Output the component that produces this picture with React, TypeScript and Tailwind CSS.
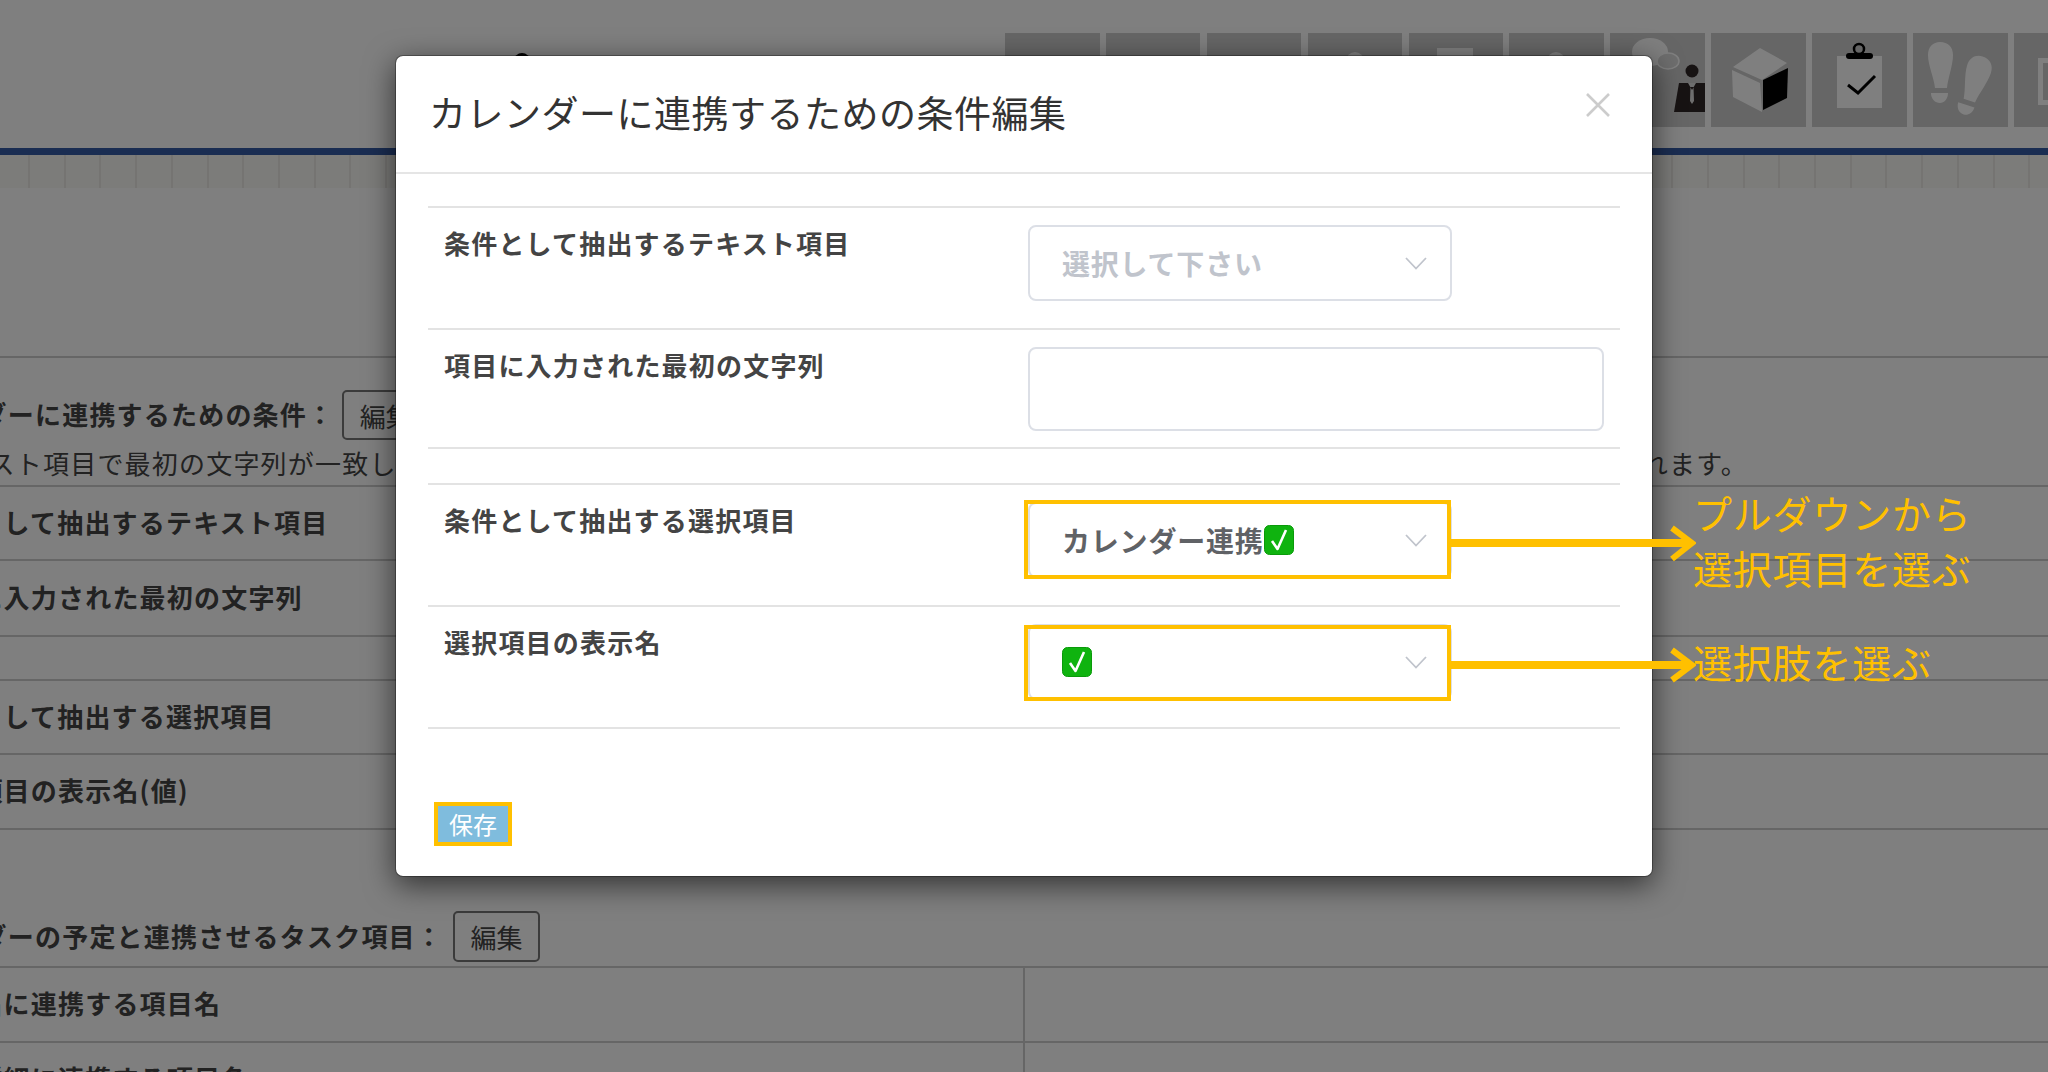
import React from "react";

const rowLabel = "text-[26px] font-bold tracking-[1.2px] leading-[36px] whitespace-nowrap";

function Tile({ children }: { children?: React.ReactNode }) {
  return (
    <div className="w-[94.5px] h-[94px] shrink-0 bg-[#cccccc] overflow-hidden">
      <svg viewBox="0 0 94.5 94" className="block w-[94.5px] h-[94px]">
        {children}
      </svg>
    </div>
  );
}

function CheckEmoji() {
  return (
    <svg viewBox="0 0 30 30" className="block w-[30px] h-[30px] shrink-0">
      <rect x="0.5" y="0.5" width="29" height="29" rx="5" fill="#0fb30f" stroke="#0a9a0a" />
      <path d="M8 16 L13.5 24 L22 5" fill="none" stroke="#ffffff" strokeWidth="2.6" strokeLinejoin="round" />
    </svg>
  );
}

function Chevron() {
  return (
    <svg viewBox="0 0 22 13" className="block w-[22px] h-[13px] shrink-0">
      <path d="M1 1 L11 11.5 L21 1" fill="none" stroke="#c0c4cc" strokeWidth="1.8" />
    </svg>
  );
}

function SelectBox({ children }: { children?: React.ReactNode }) {
  return (
    <div className="w-[424px] h-[76px] rounded-[8px] border-2 border-[#dcdfe6] flex items-center pl-[32px] pr-[23px] justify-between bg-white">
      <div className="flex items-center text-[28px] font-bold tracking-[0.8px] text-[#606266]">{children}</div>
      <Chevron />
    </div>
  );
}

function ModalRow({ label, h, children }: { label: string; h: string; children?: React.ReactNode }) {
  return (
    <div className={`flex border-b-2 border-[#e3e3e3] ${h}`}>
      <div className={`w-[600px] shrink-0 pl-[16px] pt-[17px] text-[#444444] ${rowLabel}`}>{label}</div>
      <div className="pt-[17px]">{children}</div>
    </div>
  );
}

function PageRow({ h, children }: { h: string; children?: React.ReactNode }) {
  return (
    <div className={`flex items-center border-b-2 border-[#cccccc] ${h}`}>
      <div className={`-ml-[78px] -mt-[3px] text-[#444444] ${rowLabel}`}>{children}</div>
    </div>
  );
}

function EditButton({ cls }: { cls: string }) {
  return (
    <div className={`w-[87px] rounded-[5px] border-2 border-[#777777] flex items-center justify-center text-[26px] text-[#444444] shrink-0 ${cls}`}>
      編集
    </div>
  );
}

const cells = Array.from({ length: 58 }, (_, i) => i);

export default function App() {
  return (
    <div className="relative w-[2048px] h-[1072px] overflow-hidden bg-white font-['Noto_Sans_CJK_JP','Noto_Sans_CJK_SC',sans-serif]">
      {/* page behind the dialog */}
      <div>
        <header className="relative h-[148px] pt-[33px] pl-[1005px] flex gap-[6.4px] overflow-hidden">
          <span className="absolute left-[514px] top-[53px] w-[16px] h-[16px] rounded-full bg-black" />
          <Tile><circle cx="46" cy="29" r="6" fill="#fff" /></Tile>
          <Tile><circle cx="30" cy="28" r="5" fill="#fff" /><circle cx="62" cy="28" r="5" fill="#fff" /></Tile>
          <Tile />
          <Tile><circle cx="47" cy="28" r="9" fill="#fff" /></Tile>
          <Tile><rect x="28" y="15" width="36" height="40" fill="#fff" /></Tile>
          <Tile><circle cx="47" cy="28" r="9" fill="#fff" /></Tile>
          <Tile>
            <ellipse cx="40" cy="19" rx="18" ry="14" fill="#fff" />
            <ellipse cx="58" cy="28" rx="11" ry="8" fill="#dcdcdc" stroke="#ffffff" strokeWidth="1.5" />
            <circle cx="82" cy="38" r="6.5" fill="#2f2626" />
            <path d="M69 50 L95 50 L95 79 L64 79 Z" fill="#2f2626" />
            <path d="M78 50 L82 57 L86 50 Z M80.5 54 L83.5 54 L84 68 L82 71 L80 68 Z" fill="#dddddd" />
          </Tile>
          <Tile>
            <path d="M49 15 L76 30 L51 47 L22 34 Z" fill="#fff" />
            <path d="M21 37 L49 50 L51 79 L22 64 Z" fill="#fff" />
            <path d="M52 47 L77 35 L76 65 L52 77 Z" fill="#000" />
          </Tile>
          <Tile>
            <rect x="25" y="23" width="45" height="52" fill="#fff" />
            <rect x="34" y="20" width="27" height="6" rx="3" fill="#000" />
            <circle cx="47" cy="16" r="5" fill="none" stroke="#000" strokeWidth="2.5" />
            <path d="M36 52 L46 60 L63 43" fill="none" stroke="#000" strokeWidth="3" />
          </Tile>
          <Tile>
            <g fill="#fff">
              <path d="M27 9 C35 9 40 14 40 22 C40 32 35 45 34 55 L22 55 C21 45 15 32 15 22 C15 14 20 9 27 9 Z" />
              <path d="M18 60 H35 C35 66 31 70 27 70 C22 70 18 66 18 60 Z" />
              <g transform="translate(33 13) rotate(18 27 40)">
                <path d="M27 9 C35 9 40 14 40 22 C40 32 35 45 34 55 L22 55 C21 45 15 32 15 22 C15 14 20 9 27 9 Z" />
                <path d="M18 60 H35 C35 66 31 70 27 70 C22 70 18 66 18 60 Z" />
              </g>
            </g>
          </Tile>
          <Tile>
            <rect x="24" y="25" width="40" height="47" fill="#fff" />
            <rect x="29" y="30" width="30" height="37" fill="#cccccc" />
          </Tile>
        </header>
        <div className="h-[7px] bg-[#345aa4]" />
        <div className="flex h-[33px] bg-[#f8f8f4] overflow-hidden">
          {cells.map((i) => (
            <div key={i} className={`h-[33px] shrink-0 border-r-2 border-[#ebe9e5] ${i === 0 ? "w-[30px]" : "w-[35.72px]"}`} />
          ))}
        </div>
        <div className="h-[170px] border-b-2 border-[#cccccc]" />

        <div className="flex items-center h-[50px] mt-[32px] -ml-[101px] gap-[8px]">
          <div className={`-mt-[2px] text-[#444444] ${rowLabel}`}>カレンダーに連携するための条件：</div>
          <EditButton cls="h-[50px]" />
        </div>
        <div className="flex justify-between w-[1813px] h-[45px] -ml-[65px] pt-[3px] text-[26px] tracking-[1.2px] leading-[40px] text-[#444444] whitespace-nowrap">
          <span>テキスト項目で最初の文字列が一致した</span>
          <span>れます。</span>
        </div>

        <div className="border-t-2 border-[#cccccc]">
          <PageRow h="h-[74px]">条件として抽出するテキスト項目</PageRow>
          <PageRow h="h-[76px]">項目に入力された最初の文字列</PageRow>
          <PageRow h="h-[44px]" />
          <PageRow h="h-[74px]">条件として抽出する選択項目</PageRow>
          <PageRow h="h-[75px]">選択項目の表示名(値)</PageRow>
        </div>

        <div className="flex items-center h-[51px] mt-[81px] -ml-[101px] gap-[10px]">
          <div className={`-mt-[2px] text-[#444444] ${rowLabel}`}>カレンダーの予定と連携させるタスク項目：</div>
          <EditButton cls="h-[51px]" />
        </div>
        <div className="mt-[4px] border-t-2 border-[#cccccc]">
          <div className="flex h-[75px] border-b-2 border-[#cccccc]">
            <div className="w-[1025px] border-r-2 border-[#cccccc] flex items-center">
              <div className={`-ml-[78px] -mt-[3px] text-[#444444] ${rowLabel}`}>予定名に連携する項目名</div>
            </div>
          </div>
          <div className="flex h-[75px] border-b-2 border-[#cccccc]">
            <div className="w-[1025px] border-r-2 border-[#cccccc] flex items-center">
              <div className={`-ml-[78px] -mt-[3px] text-[#444444] ${rowLabel}`}>予定詳細に連携する項目名</div>
            </div>
          </div>
        </div>
      </div>

      {/* dim layer */}
      <div className="absolute inset-0 bg-black/50" />

      {/* dialog */}
      <div className="absolute left-[395px] top-[55px] w-[1258px] h-[822px] bg-white bg-clip-padding border border-black/30 rounded-[8px] shadow-[0_8px_30px_rgba(0,0,0,0.6)]">
        <div className="flex items-center justify-between h-[118px] border-b-2 border-[#e5e5e5] pl-[33px] pr-[42px]">
          <h2 className="text-[37px] font-normal tracking-[0.5px] text-[#333333] whitespace-nowrap -mt-[3px]">
            カレンダーに連携するための条件編集
          </h2>
          <svg viewBox="0 0 24 24" className="block w-[24px] h-[24px] -mt-[19px]">
            <path d="M1 1 L23 23 M23 1 L1 23" fill="none" stroke="#cccccc" strokeWidth="2.6" />
          </svg>
        </div>
        <div className="px-[32px] pt-[32px]">
          <div className="border-t-2 border-[#e3e3e3]">
            <ModalRow label="条件として抽出するテキスト項目" h="h-[122px]">
              <SelectBox><span className="text-[#c0c4cc]">選択して下さい</span></SelectBox>
            </ModalRow>
            <ModalRow label="項目に入力された最初の文字列" h="h-[119px]">
              <div className="w-[576px] h-[84px] rounded-[8px] border-2 border-[#dcdfe6]" />
            </ModalRow>
            <div className="h-[36px] border-b-2 border-[#e3e3e3]" />
            <ModalRow label="条件として抽出する選択項目" h="h-[122px]">
              <SelectBox>カレンダー連携<CheckEmoji /></SelectBox>
            </ModalRow>
            <ModalRow label="選択項目の表示名" h="h-[122px]">
              <SelectBox><CheckEmoji /></SelectBox>
            </ModalRow>
          </div>
          <button className="block mt-[73px] ml-[6px] w-[78px] h-[44px] border-4 border-[#ffc000] bg-[#7fbcdd] text-white text-[24px] leading-none">
            保存
          </button>
        </div>
      </div>

      {/* annotations */}
      <div className="absolute left-[1024px] top-[500px] w-[427px] h-[79px] border-4 border-[#ffc000]" />
      <div className="absolute left-[1024px] top-[625px] w-[427px] h-[76px] border-4 border-[#ffc000]" />
      <svg viewBox="0 0 246 160" className="absolute left-[1450px] top-[525px] w-[246px] h-[160px]">
        <g fill="none" stroke="#ffc000">
          <path d="M0 18 H240 M0 140 H240" strokeWidth="8" />
          <path d="M222 3 L242 18 L222 34 M222 125 L242 140 L222 155" strokeWidth="6" />
        </g>
      </svg>
      <div className="absolute left-[1693px] top-[485px] text-[39px] tracking-[0.8px] leading-[55px] text-[#ffc000] whitespace-nowrap">
        プルダウンから<br />選択項目を選ぶ
      </div>
      <div className="absolute left-[1693px] top-[634px] text-[39px] tracking-[0.8px] leading-[55px] text-[#ffc000] whitespace-nowrap">
        選択肢を選ぶ
      </div>
    </div>
  );
}
